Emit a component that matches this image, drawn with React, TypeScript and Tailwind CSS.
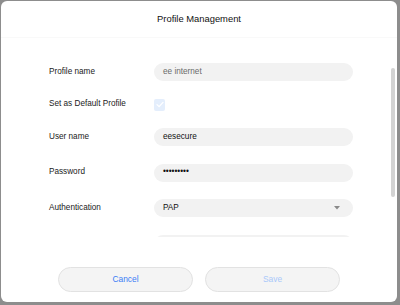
import React from "react";

const font = { fontFamily: '"Liberation Sans", Arial, Helvetica, sans-serif' };

function Row({ label, children }: { label: string; children: React.ReactNode }) {
  return (
    <div className="flex items-center">
      <div className="w-[153px] shrink-0 pl-[48px] text-[8.2px] leading-none text-[#1a1a1a] whitespace-nowrap">{label}</div>
      {children}
    </div>
  );
}

function Field({ value, muted, children }: { value: string; muted?: boolean; children?: React.ReactNode }) {
  return (
    <div className="flex h-[18px] w-[199px] items-center justify-between rounded-full bg-[#f2f2f2] pl-[9px] pr-[13px]">
      <span className={`text-[8.2px] leading-none ${muted ? "text-[#6b6b6b]" : "text-[#111]"}`}>{value}</span>
      {children}
    </div>
  );
}

export default function App() {
  return (
    <div className="h-[305px] w-[400px] bg-[#8d8d8d] pl-[1px] pt-[1px] pr-[3px] pb-[3px]" style={font}>
      <div className="flex h-full w-full flex-col overflow-hidden rounded-[6px] bg-white">
        <div className="flex h-[37px] shrink-0 items-center justify-center border-b border-[#f9f9f9]">
          <span className="text-[9.4px] text-[#111]">Profile Management</span>
        </div>
        <div className="relative h-[199px] shrink-0 overflow-hidden">
          <div className="flex flex-col gap-[17.5px] pt-[25px]">
            <Row label="Profile name">
              <Field value="ee internet" muted />
            </Row>
            <Row label="Set as Default Profile">
              <div className="flex h-[12px] w-[11px] items-center justify-center rounded-[2px] bg-[#e4eefc]">
                <svg width="8" height="7" viewBox="0 0 8 7" fill="none">
                  <path d="M1 3.6 L3.1 5.6 L7 1.4" stroke="white" strokeWidth="1.3" strokeLinecap="round" strokeLinejoin="round" />
                </svg>
              </div>
            </Row>
            <Row label="User name">
              <Field value="eesecure" />
            </Row>
            <Row label="Password">
              <Field value="•••••••••" />
            </Row>
            <Row label="Authentication">
              <Field value="PAP">
                <svg width="6" height="4" viewBox="0 0 6 4">
                  <path d="M0 0 L6 0 L3 3.5 Z" fill="#8a8a8a" />
                </svg>
              </Field>
            </Row>
            <Row label="">
              <Field value="" />
            </Row>
          </div>
          <div className="absolute right-[2.5px] top-[30px] h-[129px] w-[3.5px] rounded-full bg-[#d3d3d3]" />
        </div>
        <div className="flex flex-1 items-start justify-center gap-[12px] pt-[30px]">
          <button className="flex h-[25px] w-[135px] items-center justify-center rounded-full border border-[#e2e2e2] bg-[#f4f4f4] text-[8.4px] text-[#3a7cf6]">
            Cancel
          </button>
          <button className="flex h-[25px] w-[135px] items-center justify-center rounded-full border border-[#e2e2e2] bg-[#f4f4f4] text-[8.4px] text-[#a9c8fa]">
            Save
          </button>
        </div>
      </div>
    </div>
  );
}
